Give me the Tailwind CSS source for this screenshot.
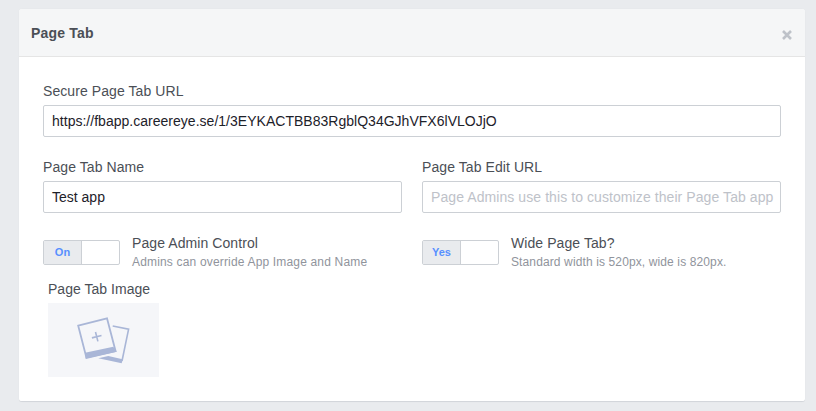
<!DOCTYPE html>
<html>
<head>
<meta charset="utf-8">
<script src="https://cdn.jsdelivr.net/npm/@tailwindcss/browser@4"></script>
</head>
<body class="bg-[#e9ebee] font-['Liberation_Sans',Arial,sans-serif] h-[411px] overflow-hidden">
<div class="pt-[9px] px-[19px]">
  <div class="w-[786px] h-[393px] bg-white rounded-[3px] border-b border-[#d3d6db] shadow-[0_0_1px_rgba(0,0,0,0.08)]">
    <header class="h-[48px] bg-[#f5f6f7] border-b border-[#e5e5e5] rounded-t-[3px] flex items-center justify-between pl-[12px] pr-[13px]">
      <h1 class="text-[14px] font-bold text-[#4b4f56] tracking-[0.2px] mt-[2px]">Page Tab</h1>
      <svg class="mt-[4px]" width="10" height="10" viewBox="0 0 10 10"><path d="M1 1 L9 9 M9 1 L1 9" stroke="#bec2c9" stroke-width="2.6"/></svg>
    </header>
    <div class="px-[24px] pt-[25px]">
      <label class="block text-[14px] leading-[18px] text-[#4b4f56] tracking-[0.08px] mb-[5px]">Secure Page Tab URL</label>
      <div class="h-[32px] border border-[#ccd0d5] rounded-[2px] flex items-center pl-[8px] text-[14px] text-[#1d2129] tracking-[0.02px]">https://fbapp.careereye.se/1/3EYKACTBB83RgblQ34GJhVFX6lVLOJjO</div>
      <div class="grid grid-cols-2 gap-x-[20px] mt-[21px]">
        <div>
          <label class="block text-[14px] leading-[18px] text-[#4b4f56] tracking-[0.08px] mb-[5px]">Page Tab Name</label>
          <div class="h-[32px] border border-[#ccd0d5] rounded-[2px] flex items-center pl-[8px] text-[14px] text-[#1d2129]">Test app</div>
        </div>
        <div>
          <label class="block text-[14px] leading-[18px] text-[#4b4f56] tracking-[0.08px] mb-[5px]">Page Tab Edit URL</label>
          <div class="h-[32px] border border-[#ccd0d5] rounded-[2px] flex items-center pl-[8px] text-[14px] text-[#bec2c9] tracking-[0.08px] whitespace-nowrap overflow-hidden">Page Admins use this to customize their Page Tab app</div>
        </div>
        <div class="flex mt-[21px]">
          <div class="w-[77px] h-[25px] mt-[6px] border border-[#ccd0d5] rounded-[2px] flex">
            <div class="w-[38px] bg-[#e9ebee] border-r border-[#ccd0d5] flex items-center justify-center text-[11px] font-bold text-[#5890ff]">On</div>
          </div>
          <div class="ml-[12px]">
            <div class="text-[14px] leading-[18px] text-[#4b4f56] tracking-[0.08px]">Page Admin Control</div>
            <div class="text-[12px] leading-[16px] mt-[2px] text-[#90949c] tracking-[0.17px] whitespace-nowrap">Admins can override App Image and Name</div>
          </div>
        </div>
        <div class="flex mt-[21px]">
          <div class="w-[77px] h-[25px] mt-[6px] border border-[#ccd0d5] rounded-[2px] flex">
            <div class="w-[38px] bg-[#e9ebee] border-r border-[#ccd0d5] flex items-center justify-center text-[11px] font-bold text-[#5890ff]">Yes</div>
          </div>
          <div class="ml-[12px]">
            <div class="text-[14px] leading-[18px] text-[#4b4f56] tracking-[0.08px]">Wide Page Tab?</div>
            <div class="text-[12px] leading-[16px] mt-[2px] text-[#90949c] tracking-[0.12px] whitespace-nowrap">Standard width is 520px, wide is 820px.</div>
          </div>
        </div>
      </div>
      <div class="ml-[5px] mt-[10px]">
        <div class="text-[14px] leading-[18px] text-[#4b4f56] tracking-[0.03px] mb-[5px]">Page Tab Image</div>
        <div class="w-[111px] h-[74px] bg-[#f5f6f9]">
          <svg width="111" height="74" viewBox="0 0 111 74" fill="none">
            <path d="M64.7 23 L80.6 26.2 L74 58" stroke="#a9b6d7" stroke-width="1.6"/>
            <path d="M50.3 55.3 L60.3 53 L74.6 56.3 L73.7 60.3 Z" fill="#a9b6d7"/>
            <path d="M30.2 22.6 L59 15.3 L67.6 48.2 L38.5 55 Z" stroke="#a9b6d7" stroke-width="1.8"/>
            <path d="M37 49.7 L65.3 43.7 L68.7 48.7 L37.7 55.6 Z" fill="#a9b6d7"/>
            <path d="M43.9 34.9 L53.5 32.5 M47.5 29 L49.9 38.4" stroke="#a9b6d7" stroke-width="1.6"/>
          </svg>
        </div>
      </div>
    </div>
  </div>
</div>
</body>
</html>
